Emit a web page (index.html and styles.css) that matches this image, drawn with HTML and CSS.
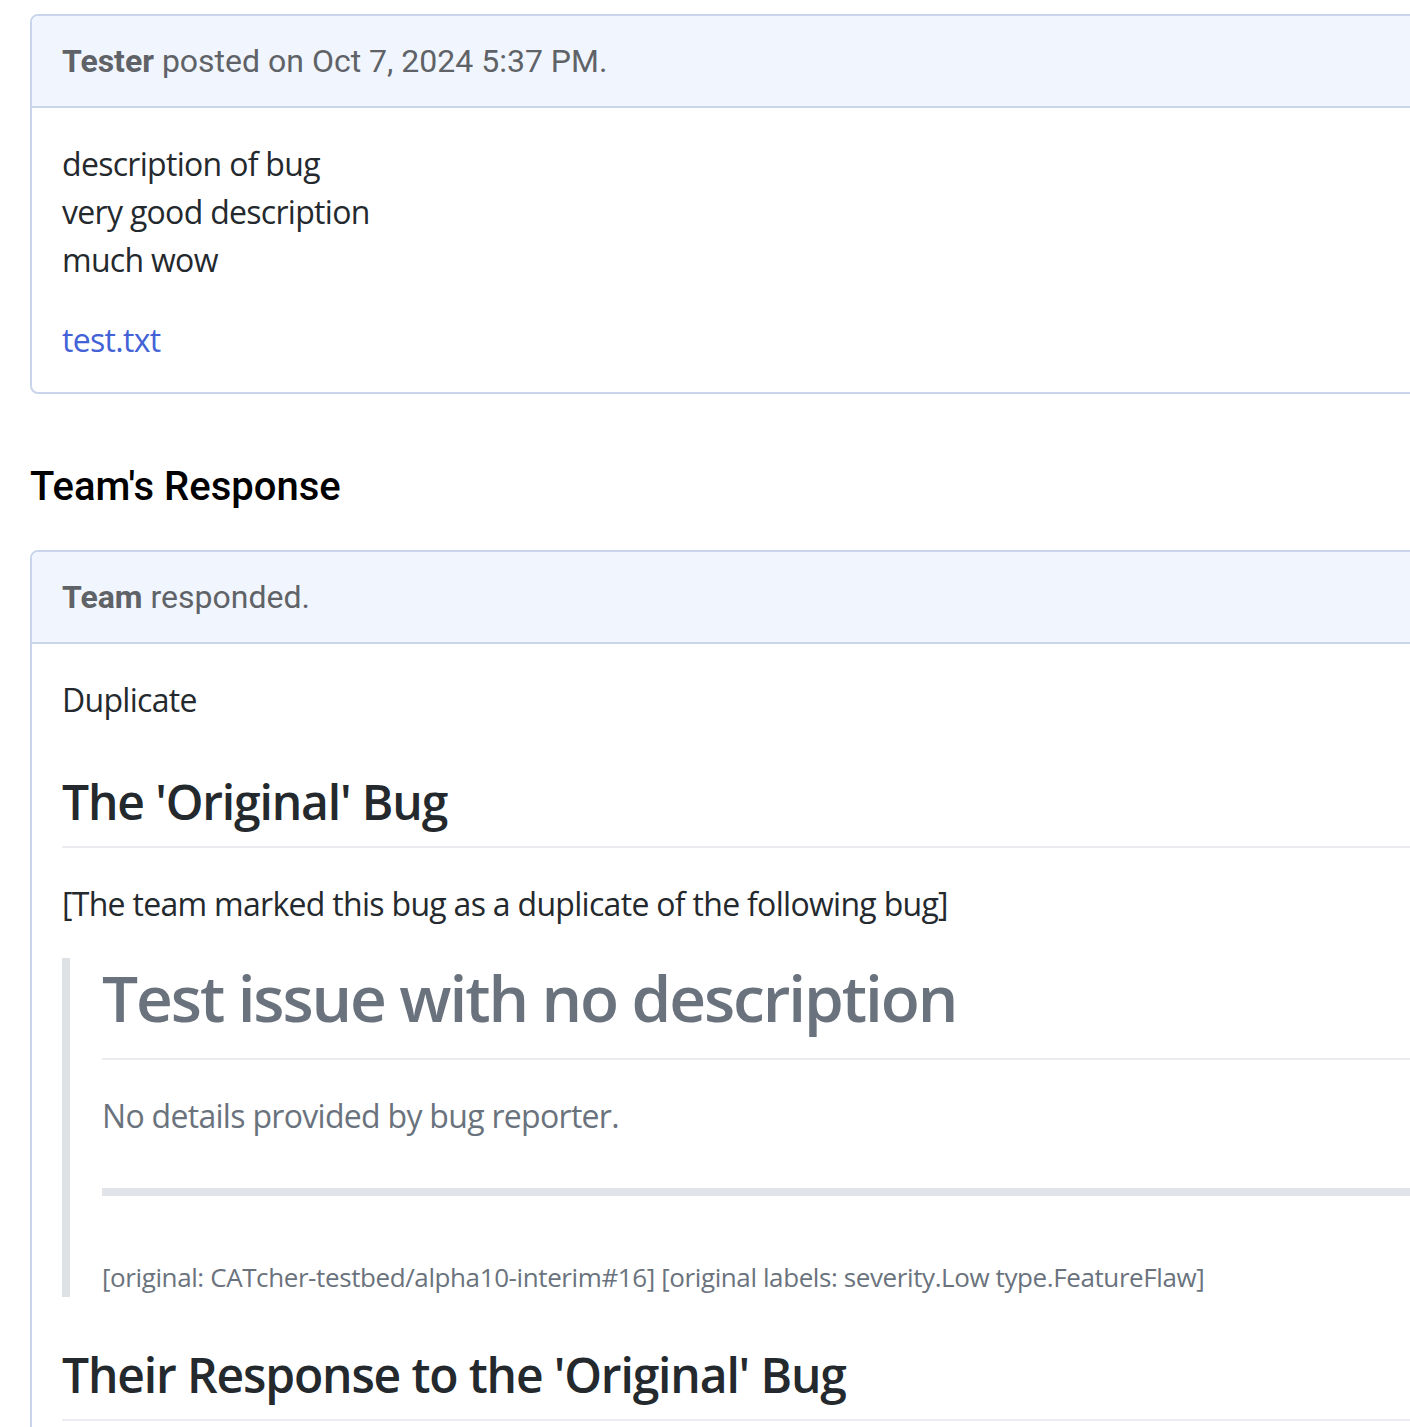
FILE: index.html
```html
<!DOCTYPE html>
<html lang="en">
<head>
<meta charset="utf-8">
<title>Issue</title>
<link rel="stylesheet" href="styles.css">
</head>
<body>
<div class="page">
  <section class="card">
    <div class="card-header"><strong>Tester</strong> posted on Oct 7, 2024 5:37 PM.</div>
    <div class="card-body markdown">
      <p>description of bug<br>very good description<br>much wow</p>
      <p><a href="#">test.txt</a></p>
    </div>
  </section>

  <h5 class="section-title">Team's Response</h5>

  <section class="card">
    <div class="card-header"><strong>Team</strong> responded.</div>
    <div class="card-body markdown">
      <p>Duplicate</p>
      <h2>The 'Original' Bug</h2>
      <p>[The team marked this bug as a duplicate of the following bug]</p>
      <blockquote>
        <h1>Test issue with no description</h1>
        <p>No details provided by bug reporter.</p>
        <hr>
        <p><sub>[original: CATcher-testbed/alpha10-interim#16] [original labels: severity.Low type.FeatureFlaw]</sub></p>
      </blockquote>
      <h2>Their Response to the 'Original' Bug</h2>
    </div>
  </section>
</div>
</body>
</html>
```
FILE: styles.css
```css
html, body {
  margin: 0;
  padding: 0;
  overflow: hidden;
  background: #ffffff;
}

.page {
  width: 1480px;
  padding: 14px 0 0 30px;
}

.card {
  border: 2px solid #c9d5ea;
  border-radius: 8px;
  background: #fff;
  overflow: hidden;
}

.card-header {
  background: #f1f6fe;
  border-bottom: 2px solid #c9d5ea;
  padding: 24px 30px;
  font-family: Roboto, "Liberation Sans", sans-serif;
  font-size: 32px;
  line-height: 42px;
  color: #5f6368;
}

.card-header strong {
  font-weight: 700;
}

.card-body {
  padding: 32px 30px 28px 30px;
}

.section-title {
  font-family: Roboto, "Liberation Sans", sans-serif;
  font-weight: 500;
  font-size: 40px;
  line-height: 48px;
  color: #000;
  margin: 69px 0 39px 0;
}

.markdown {
  font-family: "Open Sans", "Noto Sans", sans-serif;
  font-size: 32px;
  line-height: 1.5;
  color: #24292e;
  letter-spacing: -0.7px;
}

.markdown p {
  margin: 0 0 32px 0;
}

.markdown > p:last-child {
  margin-bottom: 0;
}

.markdown a {
  color: #4262d6;
  text-decoration: none;
}

.markdown h1,
.markdown h2 {
  font-weight: 600;
  line-height: 1.25;
  margin: 48px 0 32px 0;
  padding-bottom: 0.3em;
  border-bottom: 2px solid #eaecef;
}

.markdown h1 {
  font-size: 64px;
  letter-spacing: -2.1px;
}

.markdown h2 {
  font-size: 48px;
  letter-spacing: -1.15px;
}

.markdown > :first-child {
  margin-top: 0;
}

.markdown blockquote {
  margin: -2px 0 33px 0;
  padding: 0 32px;
  color: #6a737d;
  border-left: 8px solid #dfe2e5;
}

.markdown blockquote > :first-child {
  margin-top: 0;
}

.markdown blockquote > :last-child {
  margin-bottom: 0;
}

.markdown hr {
  height: 8px;
  margin: 48px 0;
  padding: 0;
  border: 0;
  background: #e1e4e8;
}

.markdown sub {
  font-size: 26px;
  letter-spacing: -0.4px;
  vertical-align: sub;
}
```
